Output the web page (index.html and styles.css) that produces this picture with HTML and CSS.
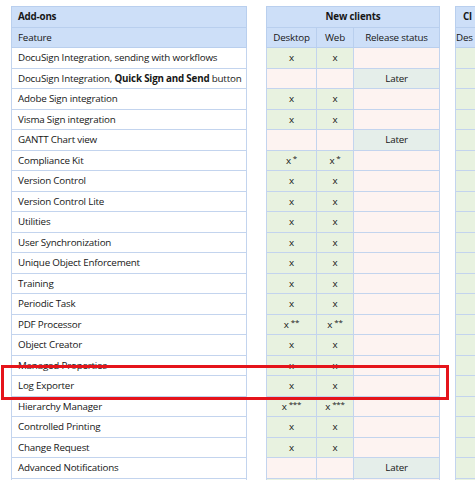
FILE: index.html
```html
<!DOCTYPE html>
<html>
<head>
<meta charset="utf-8">
<link rel="stylesheet" href="styles.css">
</head>
<body>
<div class="page">
  <table class="grid features">
    <tr class="hd"><th class="left">Add-ons</th></tr>
    <tr class="hd"><td class="left">Feature</td></tr>
    <tr><td>DocuSign Integration, sending with workflows</td></tr>
    <tr><td>DocuSign Integration, <b>Quick Sign and Send</b> button</td></tr>
    <tr><td>Adobe Sign integration</td></tr>
    <tr><td>Visma Sign integration</td></tr>
    <tr><td>GANTT Chart view</td></tr>
    <tr><td>Compliance Kit</td></tr>
    <tr><td>Version Control</td></tr>
    <tr><td>Version Control Lite</td></tr>
    <tr><td>Utilities</td></tr>
    <tr><td>User Synchronization</td></tr>
    <tr><td>Unique Object Enforcement</td></tr>
    <tr><td>Training</td></tr>
    <tr><td>Periodic Task</td></tr>
    <tr><td>PDF Processor</td></tr>
    <tr><td>Object Creator</td></tr>
    <tr><td>Managed Properties</td></tr>
    <tr><td>Log Exporter</td></tr>
    <tr><td>Hierarchy Manager</td></tr>
    <tr><td>Controlled Printing</td></tr>
    <tr><td>Change Request</td></tr>
    <tr><td>Advanced Notifications</td></tr>
    <tr><td></td></tr>
  </table>

  <table class="grid clients">
    <colgroup><col class="c-desk"><col class="c-web"><col class="c-rel"></colgroup>
    <tr class="hd"><th colspan="3">New clients</th></tr>
    <tr class="hd"><td>Desktop</td><td>Web</td><td>Release status</td></tr>
    <tr><td class="y">x</td><td class="y">x</td><td class="n"></td></tr>
    <tr><td class="n"></td><td class="n"></td><td class="l">Later</td></tr>
    <tr><td class="y">x</td><td class="y">x</td><td class="n"></td></tr>
    <tr><td class="y">x</td><td class="y">x</td><td class="n"></td></tr>
    <tr><td class="n"></td><td class="n"></td><td class="l">Later</td></tr>
    <tr><td class="y">x<sup>*</sup></td><td class="y">x<sup>*</sup></td><td class="n"></td></tr>
    <tr><td class="y">x</td><td class="y">x</td><td class="n"></td></tr>
    <tr><td class="y">x</td><td class="y">x</td><td class="n"></td></tr>
    <tr><td class="y">x</td><td class="y">x</td><td class="n"></td></tr>
    <tr><td class="y">x</td><td class="y">x</td><td class="n"></td></tr>
    <tr><td class="y">x</td><td class="y">x</td><td class="n"></td></tr>
    <tr><td class="y">x</td><td class="y">x</td><td class="n"></td></tr>
    <tr><td class="y">x</td><td class="y">x</td><td class="n"></td></tr>
    <tr><td class="y">x<sup>**</sup></td><td class="y">x<sup>**</sup></td><td class="n"></td></tr>
    <tr><td class="y">x</td><td class="y">x</td><td class="n"></td></tr>
    <tr><td class="y">x</td><td class="y">x</td><td class="n"></td></tr>
    <tr><td class="y">x</td><td class="y">x</td><td class="n"></td></tr>
    <tr><td class="y">x<sup>***</sup></td><td class="y">x<sup>***</sup></td><td class="n"></td></tr>
    <tr><td class="y">x</td><td class="y">x</td><td class="n"></td></tr>
    <tr><td class="y">x</td><td class="y">x</td><td class="n"></td></tr>
    <tr><td class="n"></td><td class="n"></td><td class="l">Later</td></tr>
    <tr><td class="y"></td><td class="y"></td><td class="n"></td></tr>
  </table>

  <table class="grid classic">
    <colgroup><col class="c3"><col class="c3b"><col class="c3c"></colgroup>
    <tr class="hd"><th colspan="3" class="left cl-head">Cl</th></tr>
    <tr class="hd"><td class="left c3-text">Des</td><td></td><td></td></tr>
    <tr><td class="y"></td><td class="y"></td><td class="n"></td></tr>
    <tr><td class="y"></td><td class="y"></td><td class="n"></td></tr>
    <tr><td class="y"></td><td class="y"></td><td class="n"></td></tr>
    <tr><td class="y"></td><td class="y"></td><td class="n"></td></tr>
    <tr><td class="y"></td><td class="y"></td><td class="n"></td></tr>
    <tr><td class="y"></td><td class="y"></td><td class="n"></td></tr>
    <tr><td class="y"></td><td class="y"></td><td class="n"></td></tr>
    <tr><td class="y"></td><td class="y"></td><td class="n"></td></tr>
    <tr><td class="y"></td><td class="y"></td><td class="n"></td></tr>
    <tr><td class="y"></td><td class="y"></td><td class="n"></td></tr>
    <tr><td class="y"></td><td class="y"></td><td class="n"></td></tr>
    <tr><td class="y"></td><td class="y"></td><td class="n"></td></tr>
    <tr><td class="y"></td><td class="y"></td><td class="n"></td></tr>
    <tr><td class="y"></td><td class="y"></td><td class="n"></td></tr>
    <tr><td class="y"></td><td class="y"></td><td class="n"></td></tr>
    <tr><td class="y"></td><td class="y"></td><td class="n"></td></tr>
    <tr><td class="y"></td><td class="y"></td><td class="n"></td></tr>
    <tr><td class="y"></td><td class="y"></td><td class="n"></td></tr>
    <tr><td class="y"></td><td class="y"></td><td class="n"></td></tr>
    <tr><td class="y"></td><td class="y"></td><td class="n"></td></tr>
    <tr><td class="y"></td><td class="y"></td><td class="n"></td></tr>
    <tr><td class="y"></td><td class="y"></td><td class="n"></td></tr>
  </table>

  <div class="highlight"></div>
</div>
</body>
</html>
```

FILE: styles.css
```css
html, body {
  margin: 0;
  padding: 0;
  background: #ffffff;
  overflow: hidden;
  width: 475px;
  height: 480px;
}

.page {
  position: relative;
  display: flex;
  align-items: flex-start;
  padding: 6px 0 0 11px;
  font-family: "Open Sans", "Liberation Sans", sans-serif;
  font-size: 9.8px;
  letter-spacing: -0.2px;
  color: #161616;
  width: 475px;
  box-sizing: border-box;
}

.grid {
  border-collapse: collapse;
  table-layout: fixed;
  flex: none;
}

.grid td, .grid th {
  border: 1px solid #c3d4ee;
  height: 20.5px;
  padding: 0 6px;
  box-sizing: border-box;
  white-space: nowrap;
  overflow: hidden;
  text-align: center;
  vertical-align: middle;
  line-height: 13px;
}

.grid th {
  font-weight: bold;
}

.hd td, .hd th {
  background: #cddff8;
  border-color: #b9cfee;
}

.left {
  text-align: left !important;
}

.features {
  width: 236px;
  margin-right: 19px;
}

.features td, .features th {
  text-align: left;
  padding-left: 6px;
}

.clients {
  width: 173px;
  margin-right: 15px;
}

.c-desk { width: 50px; }
.c-web { width: 37px; }
.c-rel { width: 86px; }

.classic {
  width: 200px;
}

.cl-head {
  padding-left: 7px !important;
}

.c3-text {
  padding-left: 0 !important;
}

.c3 { width: 40px; }
.c3b { width: 40px; }
.c3c { width: 120px; }

.y { background: #e8f2e0; }
.n { background: #fdf3f1; }
.l { background: #e5eeea; }

.grid sup {
  font-size: 8px;
  line-height: 0;
  vertical-align: 3px;
  margin-left: 2px;
}

.highlight {
  position: absolute;
  left: 1px;
  top: 365px;
  width: 448px;
  height: 35px;
  border: 3px solid #e5141b;
  box-sizing: border-box;
}
```
